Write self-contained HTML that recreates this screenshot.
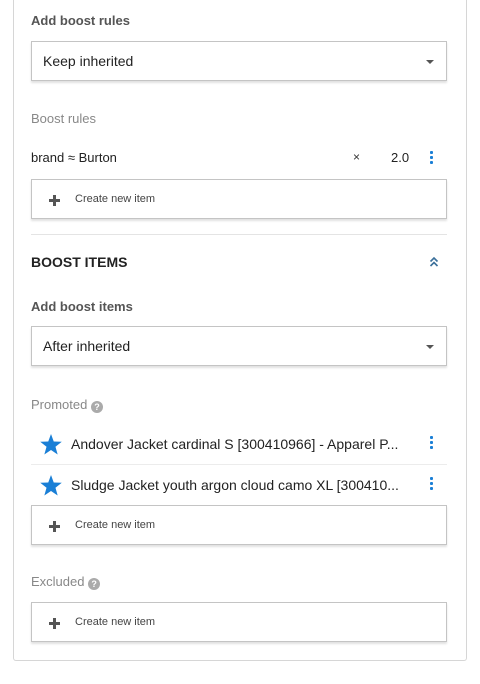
<!DOCTYPE html>
<html><head><style>
*{box-sizing:border-box;margin:0;padding:0}
body{width:480px;height:684px;background:#fff;font-family:"Liberation Sans",sans-serif;position:relative;overflow:hidden}
.panel{position:absolute;left:13px;top:-2px;width:454px;height:663px;border:1px solid #d6d6d6;border-top:none;border-radius:0 0 3px 3px}
.a{position:absolute}
.lbl{font-size:13px;font-weight:bold;color:#555}
.lbl2{font-size:13px;color:#888}
.box{position:absolute;left:31px;width:416px;border:1px solid #c4c4c4;box-shadow:0 2px 2px rgba(0,0,0,.12);background:#fff}
.sel{height:40px;font-size:14px;color:#222;padding:11px 0 0 11px}
.caret{position:absolute;right:12px;top:18px;width:0;height:0;border-left:4px solid transparent;border-right:4px solid transparent;border-top:4px solid #555}
.cr{height:40px;font-size:11px;color:#444;padding:13px 0 0 43px}
.plus{position:absolute;left:17px;top:15px;width:11px;height:11px}
.plus:before{content:"";position:absolute;left:4px;top:0;width:3px;height:11px;background:#555}
.plus:after{content:"";position:absolute;left:0;top:4px;width:11px;height:3px;background:#555}
.dots{position:absolute;width:3px}
.dots i{display:block;width:3px;height:3px;background:#1a7fd6;margin-bottom:2px;border-radius:1px}
.txt{font-size:14px;color:#222}
</style></head><body>
<div class="panel"></div>
<div class="a lbl" style="left:31px;top:13px">Add boost rules</div>
<div class="box sel" style="top:41px">Keep inherited<div class="caret"></div></div>
<div class="a lbl2" style="left:31px;top:111px">Boost rules</div>
<div class="a txt" style="left:31px;top:150px;font-size:13px">brand ≈ Burton</div>
<div class="a" style="left:353px;top:150px;font-size:12px;color:#333">×</div>
<div class="a txt" style="left:391px;top:150px;font-size:13px">2.0</div>
<div class="dots" style="left:430px;top:151px"><i></i><i></i><i></i></div>
<div class="box cr" style="top:179px"><div class="plus"></div>Create new item</div>
<div class="a" style="left:31px;top:234px;width:416px;height:1px;background:#e4e4e4"></div>
<div class="a" style="left:31px;top:254px;font-size:14px;font-weight:bold;color:#222">BOOST ITEMS</div>
<svg class="a" style="left:429px;top:256px" width="10" height="12" viewBox="0 0 10 12"><path d="M1.5 5.5L5 2l3.5 3.5M1.5 10L5 6.5l3.5 3.5" fill="none" stroke="#3a6f9a" stroke-width="1.6"/></svg>
<div class="a lbl" style="left:31px;top:299px">Add boost items</div>
<div class="box sel" style="top:326px">After inherited<div class="caret"></div></div>
<div class="a lbl2" style="left:31px;top:397px">Promoted <span style="display:inline-block;width:12px;height:12px;border-radius:50%;background:#aaa;color:#fff;font-size:9px;text-align:center;line-height:12px;font-weight:bold;vertical-align:-1px">?</span></div>
<svg class="a" style="left:40px;top:434px" width="22" height="21" viewBox="0 0 24 23"><path d="M12 0l3 8.2 8.8.3-6.9 5.4 2.4 8.5L12 17.5 4.7 22.4l2.4-8.5L.2 8.5 9 8.2z" fill="#1a7fd6"/></svg>
<div class="a txt" style="left:71px;top:436px">Andover Jacket cardinal S [300410966] - Apparel P...</div>
<div class="dots" style="left:430px;top:436px"><i></i><i></i><i></i></div>
<div class="a" style="left:31px;top:464px;width:416px;height:1px;background:#ececec"></div>
<svg class="a" style="left:40px;top:475px" width="22" height="21" viewBox="0 0 24 23"><path d="M12 0l3 8.2 8.8.3-6.9 5.4 2.4 8.5L12 17.5 4.7 22.4l2.4-8.5L.2 8.5 9 8.2z" fill="#1a7fd6"/></svg>
<div class="a txt" style="left:71px;top:477px">Sludge Jacket youth argon cloud camo XL [300410...</div>
<div class="dots" style="left:430px;top:477px"><i></i><i></i><i></i></div>
<div class="box cr" style="top:505px"><div class="plus"></div>Create new item</div>
<div class="a lbl2" style="left:31px;top:574px">Excluded <span style="display:inline-block;width:12px;height:12px;border-radius:50%;background:#aaa;color:#fff;font-size:9px;text-align:center;line-height:12px;font-weight:bold;vertical-align:-1px">?</span></div>
<div class="box cr" style="top:602px"><div class="plus"></div>Create new item</div>
</body></html>
